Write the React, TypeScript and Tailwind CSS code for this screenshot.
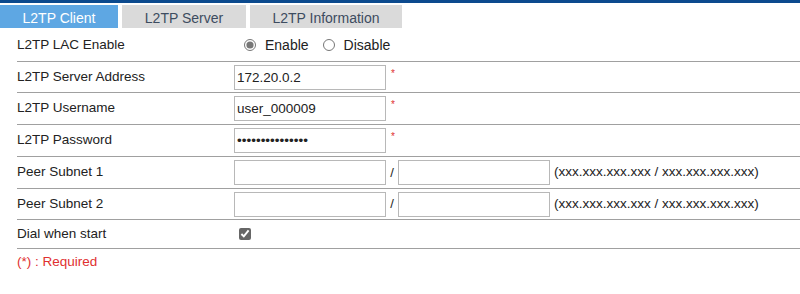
import React from "react";

const font = { fontFamily: '"Liberation Sans", Arial, sans-serif' };

function Row({ label, children, h }: { label: string; children?: React.ReactNode; h: string }) {
  return (
    <div className={`flex items-center border-b border-[#a0a0a0] ${h}`}>
      <div className="w-[217px] text-[13.5px] text-[#222]">{label}</div>
      <div className="flex items-center flex-1">{children}</div>
    </div>
  );
}

function TextBox({ value, password }: { value?: string; password?: boolean }) {
  return (
    <input
      readOnly
      type={password ? "password" : "text"}
      value={value ?? ""}
      className="w-[152px] h-[25px] border border-[#b8b8b8] bg-white px-[2px] text-[13.5px] text-[#222] outline-none"
      style={font}
    />
  );
}

const Star = () => <span className="ml-[5px] -mt-[8px] text-[10px] text-[#e03030]">*</span>;

const Hint = () => (
  <>
    <span className="w-[12px] text-center text-[13px] text-[#222]">/</span>
    <TextBox />
    <span className="ml-[4px] text-[13.5px] text-[#222]">(xxx.xxx.xxx.xxx / xxx.xxx.xxx.xxx)</span>
  </>
);

export default function App() {
  return (
    <div className="w-[800px] h-[294px] bg-white" style={font}>
      <div className="h-[3px] bg-[#0c4a8e]" />
      <div className="flex gap-[4px] pt-[2px]">
        <div className="w-[118px] h-[23px] pt-[3px] bg-[#5ea7e3] text-white text-[14px] flex items-center justify-center">L2TP Client</div>
        <div className="w-[124px] h-[23px] pt-[3px] bg-[#dadada] text-[#3d4c60] text-[14px] flex items-center justify-center">L2TP Server</div>
        <div className="w-[152px] h-[23px] pt-[3px] bg-[#dadada] text-[#3d4c60] text-[14px] flex items-center justify-center">L2TP Information</div>
      </div>
      <div className="ml-[17px] mt-[1px]">
        <Row label="L2TP LAC Enable" h="h-[33px]">
          <label className="flex items-center ml-[10px] text-[14px] text-[#222]">
            <input type="radio" name="lac" defaultChecked className="w-[12px] h-[12px] m-0 mr-[9px] accent-[#777]" />
            Enable
          </label>
          <label className="flex items-center ml-[14px] text-[14px] text-[#222]">
            <input type="radio" name="lac" className="w-[12px] h-[12px] m-0 mr-[9px]" />
            Disable
          </label>
        </Row>
        <Row label="L2TP Server Address" h="h-[31px]">
          <TextBox value="172.20.0.2" />
          <Star />
        </Row>
        <Row label="L2TP Username" h="h-[32px]">
          <TextBox value="user_000009" />
          <Star />
        </Row>
        <Row label="L2TP Password" h="h-[32px]">
          <TextBox value="sixteencharsxxx" password />
          <Star />
        </Row>
        <Row label="Peer Subnet 1" h="h-[32px]">
          <TextBox />
          <Hint />
        </Row>
        <Row label="Peer Subnet 2" h="h-[31px]">
          <TextBox />
          <Hint />
        </Row>
        <Row label="Dial when start" h="h-[29px]">
          <input type="checkbox" defaultChecked className="ml-[5px] w-[12px] h-[12px] m-0 accent-[#666]" />
        </Row>
        <div className="mt-[3px] text-[13.5px] text-[#e03030]">(*) : Required</div>
      </div>
    </div>
  );
}
